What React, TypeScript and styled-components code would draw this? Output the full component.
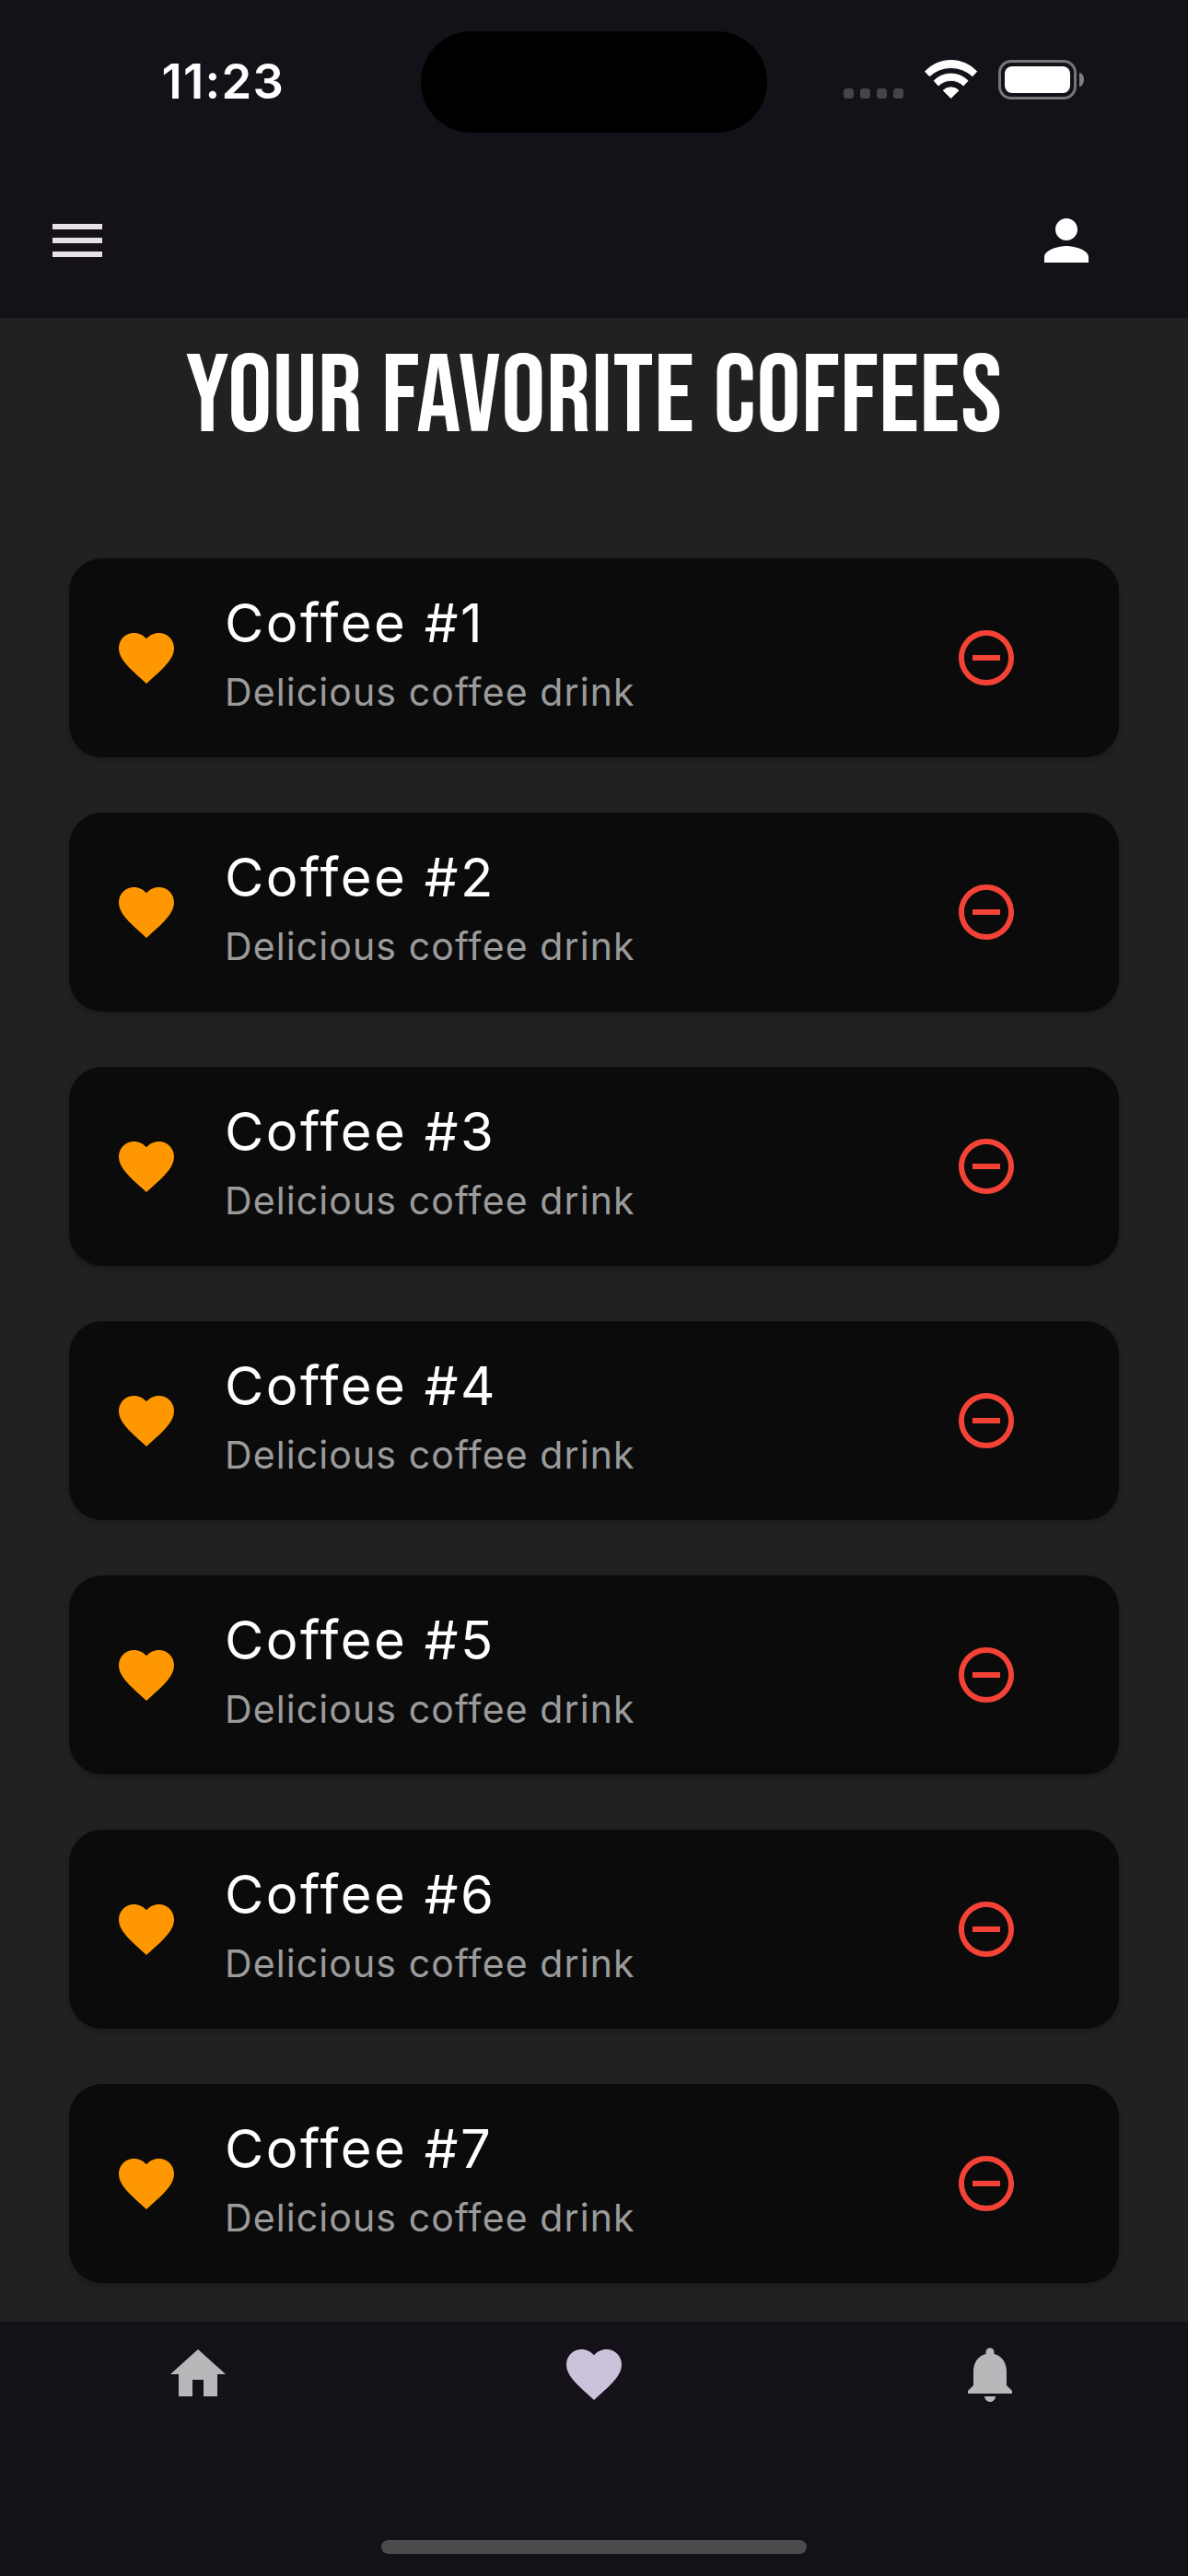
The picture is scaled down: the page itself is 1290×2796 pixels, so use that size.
import React from "react";
import styled, { createGlobalStyle } from "styled-components";
import {
  MdMenu,
  MdPerson,
  MdFavorite,
  MdRemoveCircleOutline,
  MdHome,
  MdNotifications,
} from "react-icons/md";

const GlobalStyle = createGlobalStyle`
  *, *::before, *::after { box-sizing: border-box; }
  body { margin: 0; background: #212121; }
  button { border: 0; padding: 0; margin: 0; background: none; }
`;

const Screen = styled.div`
  display: flex;
  flex-direction: column;
  width: 1290px;
  height: 2796px;
  overflow: hidden;
  background: #212121;
  color: #fff;
  font-family: Inter, Roboto, "Liberation Sans", sans-serif;
`;

const StatusBar = styled.header`
  display: grid;
  grid-template-columns: 457px 376px 457px;
  flex: none;
  height: 177px;
  padding-top: 34px;
  background: #141218;
`;

const Time = styled.time`
  padding-left: 175.5px;
  font-size: 52.5px;
  font-weight: 600;
  line-height: 64px;
  padding-top: 22px;
  letter-spacing: 1.3px;
`;

const Island = styled.div`
  height: 110px;
  border-radius: 55px;
  background: #000;
`;

const Indicators = styled.div`
  display: flex;
  align-items: flex-start;
  padding: 31px 0 0 83px;
`;

const SignalDots = styled.div`
  display: flex;
  gap: 7px;
  padding-top: 31px;
  margin-right: 23px;
`;

const Dot = styled.i`
  width: 11px;
  height: 11px;
  border-radius: 3.5px;
  background: #464449;
`;

const Wifi = styled.svg`
  width: 58px;
  height: 42px;
  margin-right: 22px;
  overflow: visible;
`;

const BatteryShell = styled.div`
  width: 85px;
  height: 43px;
  padding: 4px;
  border: 3px solid #77757a;
  border-radius: 14px;
`;

const BatteryCharge = styled.div`
  height: 100%;
  border-radius: 8px;
  background: #fff;
`;

const BatteryTip = styled.div`
  width: 5px;
  height: 15px;
  margin: 14px 0 0 3px;
  border-radius: 0 5px 5px 0 / 0 7.5px 7.5px 0;
  background: #828085;
`;

const AppBar = styled.nav`
  display: flex;
  align-items: center;
  justify-content: space-between;
  flex: none;
  height: 168px;
  padding: 0 96px 0 48px;
  background: #141218;
`;

const IconButton = styled.button<{ $color: string }>`
  display: flex;
  color: ${(p) => p.$color};
  font-size: 72px;
`;

const Content = styled.main`
  flex: 1;
  min-height: 0;
  overflow: hidden;
`;

const Title = styled.h1`
  margin: 0;
  height: 261px;
  padding-top: 15px;
  text-align: center;
  font-family: "Bebas Neue", "Open Sans Condensed", "Roboto Condensed", sans-serif;
  font-size: 120px;
  font-weight: 400;
  line-height: 144px;
  letter-spacing: 0.75px;
  white-space: nowrap;
`;

const CoffeeList = styled.ul`
  display: flex;
  flex-direction: column;
  gap: 60px;
  margin: 0;
  padding: 0 75px;
  list-style: none;
`;

const CoffeeCard = styled.li`
  display: flex;
  align-items: center;
  flex: none;
  height: 216px;
  padding: 0 108px 0 48px;
  border-radius: 36px;
  background: #0b0b0b;
  box-shadow: 0 3px 6px rgba(0, 0, 0, 0.22), inset 0 2px 8px rgba(255, 255, 255, 0.012);
`;

const CardIcon = styled.span<{ $color: string }>`
  display: flex;
  flex: none;
  color: ${(p) => p.$color};
  font-size: 72px;
`;

const CardText = styled.div`
  flex: 1;
  padding: 0 0 7px 49px;
  white-space: nowrap;
`;

const Name = styled.div`
  font-size: 58px;
  line-height: 72px;
  letter-spacing: 2.4px;
`;

const Description = styled.div`
  margin-top: 9px;
  color: #9b9b9b;
  font-size: 41px;
  line-height: 60px;
  letter-spacing: 1.1px;
`;

const BottomNav = styled.nav`
  display: grid;
  grid-template-columns: repeat(3, 1fr);
  grid-template-rows: 237px 15px;
  flex: none;
  height: 276px;
  background: #141218;
`;

const Tab = styled.button<{ $active?: boolean }>`
  display: flex;
  justify-content: center;
  padding-top: 21px;
  color: ${(p) => (p.$active ? "#ccc2dc" : "#b8b8ba")};
  font-size: 72px;
`;

const HomeIndicator = styled.div`
  grid-column: 1 / -1;
  justify-self: center;
  width: 462px;
  border-radius: 8px;
  background: #4b4a4c;
`;

const coffees = [1, 2, 3, 4, 5, 6, 7];

export default function App() {
  return (
    <Screen>
      <GlobalStyle />
      <StatusBar>
        <Time>11:23</Time>
        <Island />
        <Indicators>
          <SignalDots>
            <Dot />
            <Dot />
            <Dot />
            <Dot />
          </SignalDots>
          <Wifi viewBox="0 0 58 42" fill="#fff" stroke="#fff" strokeWidth="1" strokeLinejoin="round">
            <path d="M.5 12.6A38.5 38.5 0 0 1 56.7 12.6L51.9 17.7A34 34 0 0 0 5.3 17.7Z" />
            <path d="M10.2 22.6A26 26 0 0 1 47 22.6L42.2 28A19.2 19.2 0 0 0 15 28Z" />
            <path d="M20.2 33.2A12.2 12.2 0 0 1 37 33.2L28.6 41.4Z" />
          </Wifi>
          <BatteryShell>
            <BatteryCharge />
          </BatteryShell>
          <BatteryTip />
        </Indicators>
      </StatusBar>
      <AppBar>
        <IconButton $color="#e6e0e9" aria-label="Menu">
          <MdMenu />
        </IconButton>
        <IconButton $color="#fff" aria-label="Profile">
          <MdPerson />
        </IconButton>
      </AppBar>
      <Content>
        <Title>YOUR FAVORITE COFFEES</Title>
        <CoffeeList>
          {coffees.map((n) => (
            <CoffeeCard key={n}>
              <CardIcon $color="#ff9800">
                <MdFavorite />
              </CardIcon>
              <CardText>
                <Name>Coffee #{n}</Name>
                <Description>Delicious coffee drink</Description>
              </CardText>
              <IconButton $color="#f44336" aria-label="Remove">
                <MdRemoveCircleOutline />
              </IconButton>
            </CoffeeCard>
          ))}
        </CoffeeList>
      </Content>
      <BottomNav>
        <Tab aria-label="Home">
          <MdHome />
        </Tab>
        <Tab $active aria-label="Favorites">
          <MdFavorite />
        </Tab>
        <Tab aria-label="Notifications">
          <MdNotifications />
        </Tab>
        <HomeIndicator />
      </BottomNav>
    </Screen>
  );
}
